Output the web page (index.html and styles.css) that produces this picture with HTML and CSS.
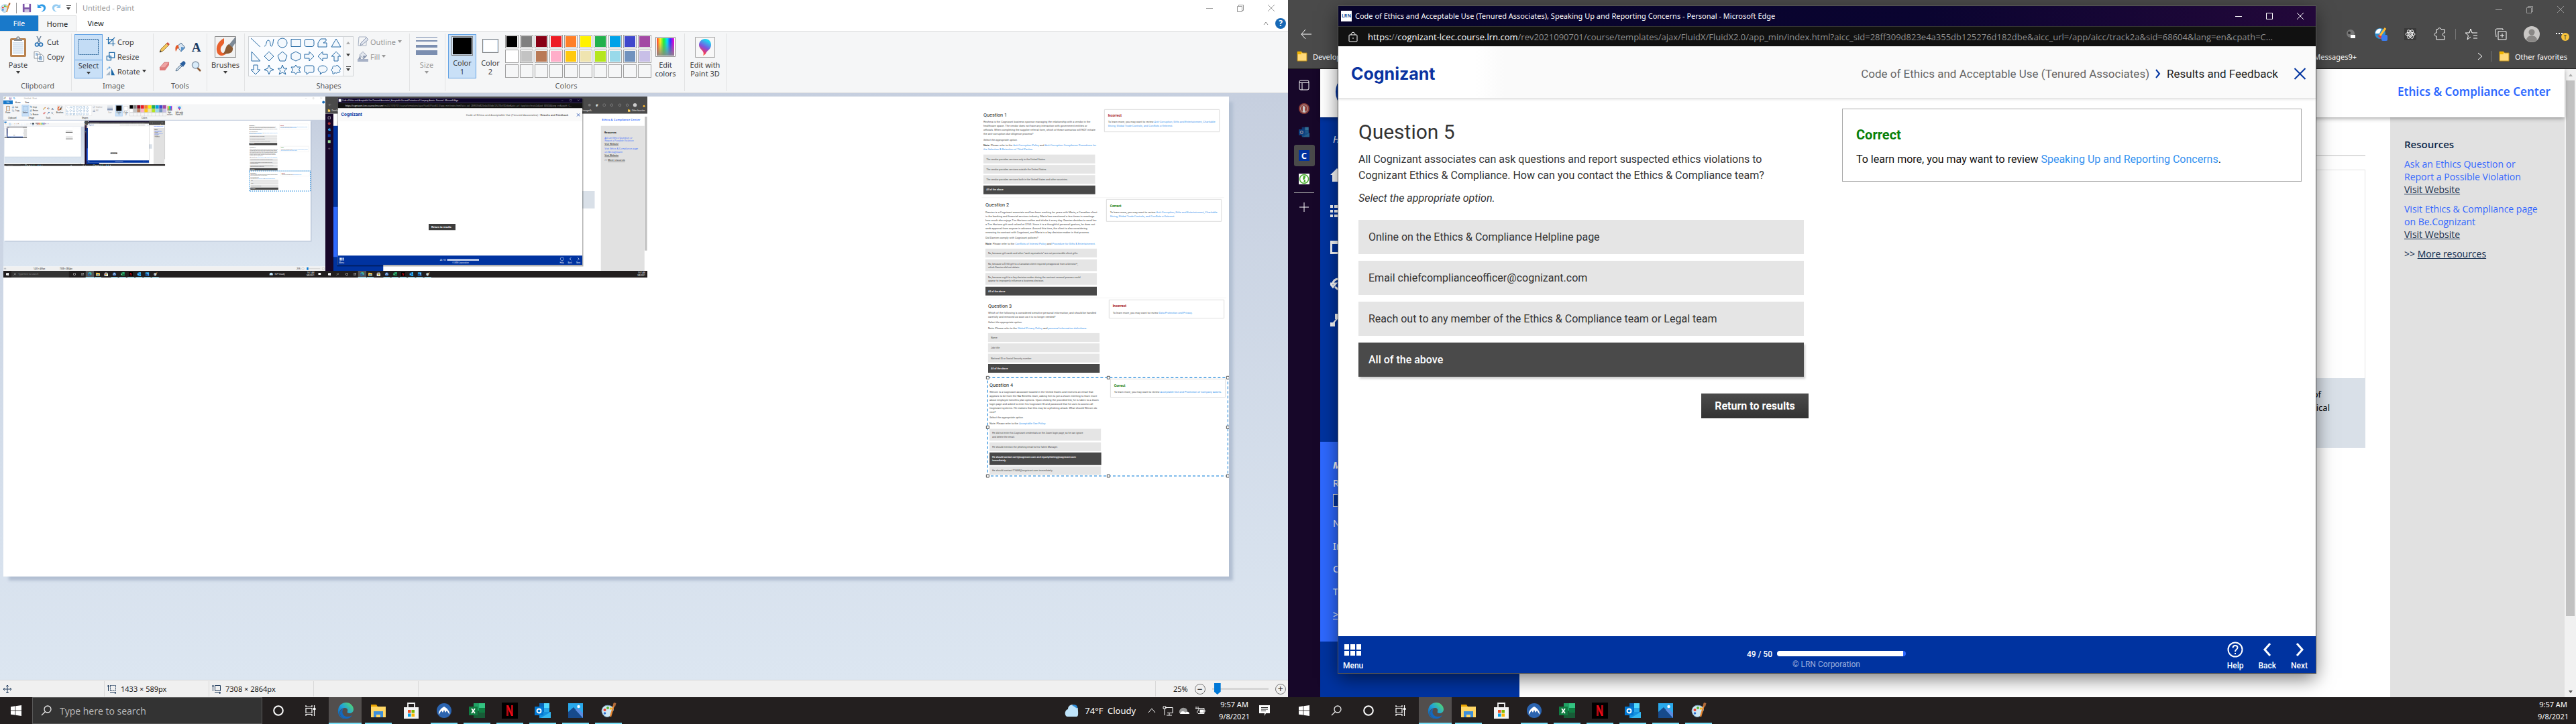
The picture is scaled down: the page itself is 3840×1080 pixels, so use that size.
FILE: index.html
```html
<!DOCTYPE html>
<html lang="en">
<head>
<meta charset="utf-8">
<title>Desktop</title>
<link rel="stylesheet" href="styles.css">
</head>
<body>
<svg class="defs" aria-hidden="true">
<defs>
  <symbol id="paint" viewBox="0 0 24 24"><path d="M2 12C3 5 9 3 15 5c5 2 6 7 2 9-2 1-1 3-2 5-2 4-12 4-13-7z" fill="#cfe8f5" stroke="#7fa9c4"/><circle cx="6.500" cy="11" r="2" fill="#e8402f"/><circle cx="11" cy="8" r="2" fill="#5bb531"/><circle cx="15.500" cy="9" r="1.800" fill="#f5b520"/><circle cx="6.500" cy="16" r="1.800" fill="#2d6fd0"/><path d="M21 1l-6 20" stroke="#e8862f" stroke-width="2.400"/><path d="M20 0l3.500 1-1.500 5-3-1z" fill="#b06a3b"/></symbol>
  <symbol id="save" viewBox="0 0 16 16"><path d="M1 1h14v14H1z" fill="#7d55a8"/><path d="M4 1h8v6H4z" fill="#fff"/><path d="M4 10h8v5H4z" fill="#cfc4de"/></symbol>
  <symbol id="undo" viewBox="0 0 16 16"><path d="M1 1v7h7L5.500 5.500C9 4 12 6 11.500 9.500 11 12 9 13.500 7 14.500c5 0 8-3 8-7C15 2 8 0 3.500 3.500z" fill="#2e9be6"/></symbol>
  <symbol id="paste" viewBox="0 0 26 32"><rect x="1" y="3" width="24" height="28" rx="2" fill="#b98350"/><path d="M4 6h18v22H4z" fill="#fff"/><path d="M5 10h16M5 13h16M5 16h16M5 19h16M5 22h16M5 25h16" stroke="#a9c3de"/><path d="M7 7V4h3c0-5 6-5 6 0h3v3z" fill="#8b8f94"/><circle cx="13" cy="3" r="1" fill="#fff"/></symbol>
  <symbol id="cut" viewBox="0 0 16 16"><path d="M5 0l5 10M11 0L6 10" stroke="#6d8299" stroke-width="1.500"/><circle cx="5" cy="12.500" r="2.500" fill="none" stroke="#2671b5" stroke-width="1.600"/><circle cx="11" cy="12.500" r="2.500" fill="none" stroke="#2671b5" stroke-width="1.600"/></symbol>
  <symbol id="copy" viewBox="0 0 16 16"><path d="M1 1h6l3 3v7H1zM6 5h6l3 3v7.500H6z" fill="#fff" stroke="#8a939c"/><path d="M3 4h3M3 6h3M8 9h5M8 11h5M8 13h5" stroke="#3c7dbd"/></symbol>
  <symbol id="select" viewBox="0 0 32 32"><rect x="1.500" y="4.500" width="29" height="23" fill="#c3dcf5" stroke="#17548c" stroke-dasharray="2 1"/></symbol>
  <symbol id="crop" viewBox="0 0 16 16"><path d="M4 0v12h12M0 4h12v12M5 11l10-10" fill="none" stroke="#1b67a6" stroke-width="1.400"/></symbol>
  <symbol id="resize" viewBox="0 0 16 16"><path d="M5.500 1.500h9v9h-9zM1.500 7.500h7v7h-7z" fill="#f5f9fd" stroke="#1b67a6" stroke-width="1.400"/></symbol>
  <symbol id="rotate" viewBox="0 0 16 16"><path d="M9 3l6 12H9z" fill="#1b67a6"/><path d="M7 8v7H0z" fill="#a8b8c8"/><path d="M2 6c0-3 2-4 5-4M5 0l2 2-2 2" fill="none" stroke="#2f86cf"/></symbol>
  <symbol id="pencil" viewBox="0 0 16 16"><path d="M1 15l2-5 9-9 3 3-9 9z" fill="#f3c55b" stroke="#8b6b2c" stroke-width=".8"/><path d="M11 2l3 3 2-2-3-3z" fill="#cf5044"/><path d="M1 15l1-3 2 2z" fill="#333"/></symbol>
  <symbol id="bucket" viewBox="0 0 16 16"><path d="M3 6l6-5 6 7-6 6z" fill="#d7e5f2" stroke="#52708f"/><path d="M9 7l6 1-6 6z" fill="#5c94c9"/><path d="M4 4C0 5 0 9 1 14c2-3 2-5 5-6z" fill="#e35a28"/></symbol>
  <symbol id="eraser" viewBox="0 0 16 16"><path d="M1 10l7-8h7l-6 8z" fill="#f0a3a3" stroke="#bb5959" stroke-width=".7"/><path d="M1 10h8v4H1zM9 10l6-8v4l-6 8z" fill="#e07a7a"/></symbol>
  <symbol id="dropper" viewBox="0 0 16 16"><path d="M1 15l1-3 6-6 2 2-6 6z" fill="#cfdde9" stroke="#54718c"/><path d="M7 4l5 5 1-2 2-2c2-3-2-6-4-4L9 3z" fill="#2a5f9e"/></symbol>
  <symbol id="lens" viewBox="0 0 16 16"><path d="M9 10l5 5" stroke="#8c5a33" stroke-width="2.500"/><circle cx="6.500" cy="6" r="5" fill="#d9ecfa" stroke="#8b9cad" stroke-width="1.500"/></symbol>
  <symbol id="brush" viewBox="0 0 32 32"><path d="M.5.500h31v31H.5z" fill="#f2f2f2" stroke="#8a8a8a"/><path d="M14 3C4 8 1 17 4 25c3 6 11 4 13 1-6 0-9-3-8-8 1-4 4-5 5-8z" fill="#e8602c"/><path d="M31 1L21 13l5 4 5-7z" fill="#7d8a97"/><path d="M21 12l6 5c1 8-5 10-15 9 5-3 3-11 9-14z" fill="#8a5a33"/></symbol>
  <symbol id="outline" viewBox="0 0 16 16"><path d="M2 1h11v13H1z" fill="none" stroke="#a9b3c4"/><path d="M4 14l1-4 8-8 3 3-8 7z" fill="#dfe4ee" stroke="#8d99b0"/></symbol>
  <symbol id="fill" viewBox="0 0 16 16"><path d="M3 6l5-5 6 6-5 5z" fill="#e3e7ee" stroke="#97a2b5"/><path d="M0 12h16v4H0z" fill="#a7b1c6"/><path d="M4 6l-3 6h4zM8 7h6l-5 5z" fill="#8d99b0"/></symbol>
  <symbol id="size" viewBox="0 0 32 32"><path d="M0 1h32v1H0zM0 6h32v2H0zM0 13h32v4H0zM0 21h32v7H0z" fill="#7b8eb0"/></symbol>
  <linearGradient id="rainbow"><stop offset="0" stop-color="#f33"/><stop offset=".2" stop-color="#fe2"/><stop offset=".4" stop-color="#2e3"/><stop offset=".6" stop-color="#0df"/><stop offset=".78" stop-color="#33f"/><stop offset="1" stop-color="#f0c"/></linearGradient>
  <linearGradient id="greyout" x2="0" y2="1"><stop offset=".2" stop-color="#888" stop-opacity="0"/><stop offset="1" stop-color="#888" stop-opacity=".9"/></linearGradient>
  <symbol id="spectrum" viewBox="0 0 32 32"><path d="M1.500 1.500h29v29h-29z" fill="#fff" stroke="#8a8a8a"/><path d="M3 3h26v26H3z" fill="url(#rainbow)"/><path d="M3 3h26v26H3z" fill="url(#greyout)"/></symbol>
  <linearGradient id="drop3d" x1="0" y1="1" x2=".4" y2="0"><stop offset="0" stop-color="#ffb300"/><stop offset=".3" stop-color="#ee3767"/><stop offset=".6" stop-color="#7b55e0"/><stop offset="1" stop-color="#22d3f2"/></linearGradient>
  <symbol id="p3d" viewBox="0 0 32 32"><path d="M1.500 1.500h29v30h-29z" fill="#f8f8f8" stroke="#a5a5a5"/><path d="M16 4c6 0 9 4 9 9 0 6-5 8-7 11-1 2-2 4-5 5 1-2 1-4 0-6-3-4-6-6-6-10 0-5 4-9 9-9z" fill="url(#drop3d)"/></symbol>

  <symbol id="s1" viewBox="0 0 16 16"><path d="M1 1l14 13"/></symbol>
  <symbol id="s2" viewBox="0 0 16 16"><path d="M1 13c4 0 2-9 6-9s2 10 5 9c2-1 2-7 3-11"/></symbol>
  <symbol id="s3" viewBox="0 0 16 16"><circle cx="8" cy="8" r="7"/></symbol>
  <symbol id="s4" viewBox="0 0 16 16"><path d="M1 2.500h14v11H1z"/></symbol>
  <symbol id="s5" viewBox="0 0 16 16"><rect x="1" y="2.500" width="14" height="11" rx="3"/></symbol>
  <symbol id="s6" viewBox="0 0 16 16"><path d="M1 14V8l4-6h8v3l-4 3h5v6z"/></symbol>
  <symbol id="s7" viewBox="0 0 16 16"><path d="M8 2l7 12H1z"/></symbol>
  <symbol id="s8" viewBox="0 0 16 16"><path d="M2 1v14h13z"/></symbol>
  <symbol id="s9" viewBox="0 0 16 16"><path d="M8 1l7 7-7 7-7-7z"/></symbol>
  <symbol id="s10" viewBox="0 0 16 16"><path d="M8 1l7 6-3 8H4L1 7z"/></symbol>
  <symbol id="s11" viewBox="0 0 16 16"><path d="M8 1l7 3.500v7L8 15l-7-3.500v-7z"/></symbol>
  <symbol id="s12" viewBox="0 0 16 16"><path d="M1 5h7V1l7 7-7 7v-4H1z"/></symbol>
  <symbol id="s13" viewBox="0 0 16 16"><path d="M15 5H8V1L1 8l7 7v-4h7z"/></symbol>
  <symbol id="s14" viewBox="0 0 16 16"><path d="M5 15V8H1l7-7 7 7h-4v7z"/></symbol>
  <symbol id="s15" viewBox="0 0 16 16"><path d="M5 1v7H1l7 7 7-7h-4V1z"/></symbol>
  <symbol id="s16" viewBox="0 0 16 16"><path d="M8 1l2 5 5 2-5 2-2 5-2-5-5-2 5-2z"/></symbol>
  <symbol id="s17" viewBox="0 0 16 16"><path d="M8 1l2 5h5l-4 3.500 2 5.500-5-3-5 3 2-5.500L1 6h5z"/></symbol>
  <symbol id="s18" viewBox="0 0 16 16"><path d="M8 1l2 3h5l-2.500 4L15 12h-5l-2 3-2-3H1l2.500-4L1 4h5z"/></symbol>
  <symbol id="s19" viewBox="0 0 16 16"><path d="M3 2h10q2 0 2 2v6q0 2-2 2H8l-4 3v-3H3q-2 0-2-2V4q0-2 2-2z"/></symbol>
  <symbol id="s20" viewBox="0 0 16 16"><path d="M4 15l1-3C-1 10 0 2 8 2s9 8 2 10H8z"/></symbol>
  <symbol id="s21" viewBox="0 0 16 16"><path d="M3 14c2 1 3-1 3-2 2 2 4 1 4 0 3 1 5-1 3-3 3-2 1-5-1-5 0-3-4-3-5-1C4 1 2 4 3 6c-3 1-2 4 0 5z"/></symbol>

  <symbol id="win" viewBox="0 0 16 16"><path d="M0 2.200l6.500-.9v6.200H0zM7.300 1.200L16 0v7.500H7.300zM0 8.300h6.500v6.300L0 13.700zM7.300 8.300H16V16l-8.700-1.200z" fill="#fff"/></symbol>
  <symbol id="search" viewBox="0 0 16 16"><circle cx="10" cy="6" r="5" fill="none" stroke="#e8e8e8" stroke-width="1.300"/><path d="M6.500 9.500L1 15" stroke="#e8e8e8" stroke-width="1.300"/></symbol>
  <symbol id="cortana" viewBox="0 0 16 16"><circle cx="8" cy="8" r="6.800" fill="none" stroke="#fff" stroke-width="2"/></symbol>
  <symbol id="tasks" viewBox="0 0 16 16"><path d="M1 0v2.500h9V0M1 16v-2.500h9V16M1 4.500h9v7H1zM13.500 0v16" fill="none" stroke="#fff" stroke-width="1.200"/><path d="M12 4h3.500v3H12z" fill="#fff"/></symbol>
  <linearGradient id="edgeg" x1="0" y1="1" x2="1" y2="0"><stop offset="0" stop-color="#0c4fa8"/><stop offset=".5" stop-color="#1fa0dc"/><stop offset="1" stop-color="#5de35a"/></linearGradient>
  <symbol id="edge" viewBox="0 0 24 24"><path d="M1 11C2 4 7 0 13 0c6 0 11 5 11 10 0 4-3 6-6 6-3 0-4-1-3-3 1-3-1-5-4-5-5 0-8 4-8 7 0 5 4 8 8 9C4 24 0 18 1 11z" fill="url(#edgeg)"/><path d="M9 9c-4 6 0 12 6 12 3 0 5-1 7-2-2 3-5 5-9 5-6 0-10-5-9-9 0-3 2-5 5-6z" fill="#1368c0"/></symbol>
  <symbol id="folder" viewBox="0 0 24 24"><path d="M1 3h8l2 3h12v15H1z" fill="#e8a200"/><path d="M1 6h22v16H1z" fill="#ffd766"/><path d="M5 22v-9h14v9h-4v-4H9v4z" fill="#3d8fdb"/></symbol>
  <symbol id="store" viewBox="0 0 24 24"><path d="M1 7h22v17H1z" fill="#f4f4f4"/><path d="M7 7V1h10v6" fill="none" stroke="#f4f4f4" stroke-width="1.800"/><path d="M7 11h4.500v4.500H7z" fill="#f25022"/><path d="M12.500 11H17v4.500h-4.500z" fill="#7fba00"/><path d="M7 16.500h4.500V21H7z" fill="#00a4ef"/><path d="M12.500 16.500H17V21h-4.500z" fill="#ffb900"/></symbol>
  <symbol id="nord" viewBox="0 0 24 24"><circle cx="12" cy="12" r="11" fill="#2b64b0"/><path d="M4 18c-1-5 4-10 8-12 4 2 9 7 8 12l-4-6-2 3-2-4-2 4-2-3z" fill="#fff"/></symbol>
  <symbol id="excel" viewBox="0 0 24 24"><path d="M7 1h17v22H7z" fill="#21a366"/><path d="M15 1h9v7h-9z" fill="#33c481"/><path d="M7 12h17v11H7z" fill="#185c37"/><path d="M15 8h9v7h-9z" fill="#107c41"/><path d="M0 6h13v13H0z" fill="#107c41"/><path d="M4 9l5 7M9 9l-5 7" stroke="#fff" stroke-width="1.800"/></symbol>
  <symbol id="netflix" viewBox="0 0 24 24"><path d="M0 0h24v24H0z"/><path d="M8.500 4v16M15.500 4v16" stroke="#b20710" stroke-width="3"/><path d="M7 4h3l7 16h-3z" fill="#e50914"/></symbol>
  <symbol id="outlook" viewBox="0 0 24 24"><path d="M7 1h15v20H7z" fill="#0a66b8"/><path d="M14 1h8v7h-8z" fill="#50d9ff"/><path d="M14 8h8v7h-8z" fill="#28a8ea"/><path d="M7 14h17v9H7z" fill="#1490df"/><path d="M24 14L9 23h15z" fill="#35b8f1"/><path d="M0 6h13v13H0z" fill="#0078d4"/><circle cx="6.500" cy="12.500" r="3" fill="none" stroke="#fff" stroke-width="1.800"/></symbol>
  <symbol id="photos" viewBox="0 0 24 24"><path d="M1 1h22v22H1z" fill="#29a9ec"/><path d="M1 14l8-7 14 16H1z" fill="#174a8c"/><path d="M12 11l3-3 8 8v7z" fill="#5b8be0"/><circle cx="16.500" cy="6" r="2.200" fill="#fff"/></symbol>
  <symbol id="bookmark" viewBox="0 0 16 16"><path d="M1 1h6l1.500 2H15v12H1z" fill="#ffd97a" stroke="#b98a15"/><path d="M1 1h6v4H1z" fill="#f0b400"/></symbol>

  <!-- question snips pasted on the drawing -->
  <g id="q1" class="snip">
    <text x="78" y="72" class="snip-h">Question 1</text>
    <text x="78" y="100">Reshma is the Cognizant business sponsor managing the relationship with a vendor in the</text>
    <text x="78" y="118">healthcare space. The vendor does not have any interaction with government entities or</text>
    <text x="78" y="136">officials. When completing the supplier referral form, which of these scenarios will NOT initiate</text>
    <text x="78" y="154">the anti-corruption due diligence process?</text>
    <text x="78" y="180" class="it">Select the appropriate option.</text>
    <text x="78" y="205"><tspan class="b">Note:</tspan> Please refer to the <tspan class="lk">Anti-Corruption Policy</tspan> and <tspan class="lk">Anti-Corruption Compliance Procedures for</tspan></text>
    <text x="78" y="222" class="lk">the Selection &amp; Retention of Third Parties.</text>
    <path class="opt" d="M78 242h499v39H78zM78 288h499v39H78zM78 334h499v39H78z"/><path class="on" d="M78 380h500v39H78z"/>
    <g class="ans"><text x="91" y="266">The vendor provides services only in the United States.</text>
    <text x="91" y="312">The vendor provides services outside the United States.</text>
    <text x="91" y="357">The vendor provides services both in the United States and other countries.</text>
    <text x="91" y="403" class="w">All of the above</text></g>
    <path class="box" d="M619 40h514v100H619z"/>
    <text x="635" y="72" class="bad">Incorrect</text>
    <text x="635" y="100">To learn more, you may want to review <tspan class="lk">Anti-Corruption, Gifts and Entertainment, Charitable</tspan></text>
    <text x="635" y="118" class="lk">Giving, Global Trade Controls, and Conflicts of Interest.</text>
    <path d="M70 434h1084" stroke="#eee" stroke-width="2"/>
  </g>
  <g id="q2" class="snip">
    <text x="87" y="475" class="snip-h">Question 2</text>
    <text x="87" y="504">Damien is a Cognizant associate and has been working for years with Maria, a Canadian client</text>
    <text x="87" y="521">in the banking and financial services industry. Maria has mentioned a few times in meetings</text>
    <text x="87" y="539">how much she enjoys Tim Hortons coffee and drinks it every day. Damien decides to send her</text>
    <text x="87" y="557">a Tim Hortons gift card valued at $150. Since it is a thoughtful personal gesture, he does not</text>
    <text x="87" y="575">seek approval from anyone in advance. Around this time, the client is also considering</text>
    <text x="87" y="593">renewing its contract with Cognizant, and Maria is a key decision-maker in that process.</text>
    <text x="87" y="619">Did Damien comply with Cognizant policies?</text>
    <text x="87" y="644"><tspan class="b">Note:</tspan> Please refer to the <tspan class="lk">Conflicts of Interest Policy</tspan> and <tspan class="lk">Procedure for Gifts &amp; Entertainment.</tspan></text>
    <path class="opt" d="M87 663h498v39H87zM87 711h498v52H87zM87 772h498v52H87z"/><path class="on" d="M87 833h498v39H87z"/>
    <g class="ans"><text x="99" y="688">No, because gift cards and other "cash equivalents" are not permissible client gifts.</text>
    <text x="99" y="734">No, because a $150 gift to a Canadian client required preapproval from a Director+,</text>
    <text x="99" y="750">which Damien did not obtain.</text>
    <text x="99" y="795">No, because a gift to a key decision-maker during the contract renewal process could</text>
    <text x="99" y="811">appear to improperly influence a business decision.</text>
    <text x="99" y="857" class="w">All of the above</text></g>
    <path class="box" d="M628 442h514v99H628z"/>
    <text x="644" y="476" class="good">Correct</text>
    <text x="644" y="504">To learn more, you may want to review <tspan class="lk">Anti-Corruption, Gifts and Entertainment, Charitable</tspan></text>
    <text x="644" y="521" class="lk">Giving, Global Trade Controls, and Conflicts of Interest.</text>
    <path d="M80 883h1084" stroke="#eee" stroke-width="2"/>
  </g>
  <g id="q3" class="snip">
    <text x="99" y="926" class="snip-h">Question 3</text>
    <text x="99" y="953">Which of the following is considered sensitive personal information, and should be handled</text>
    <text x="99" y="971">carefully and removed as soon as it is no longer needed?</text>
    <text x="99" y="996" class="it">Select the appropriate option.</text>
    <text x="99" y="1023">Note: Please refer to the <tspan class="lk">Global Privacy Policy</tspan> and <tspan class="lk">personal information definitions.</tspan></text>
    <path class="opt" d="M99 1041h498v39H99zM99 1087h498v39H99zM99 1133h498v39H99z"/><path class="on" d="M99 1179h499v39H99z"/>
    <g class="ans"><text x="111" y="1065">Name</text><text x="111" y="1111">Job title</text><text x="111" y="1157">National ID or Social Security number</text>
    <text x="111" y="1203" class="w">All of the above</text></g>
    <path class="box" d="M640 892h514v82H640z"/>
    <text x="656" y="925" class="bad">Incorrect</text>
    <text x="656" y="953">To learn more, you may want to review <tspan class="lk">Data Protection and Privacy.</tspan></text>
  </g>
  <g id="q4" class="snip">
    <text x="105" y="1280" class="snip-h">Question 4</text>
    <text x="105" y="1307">Wenxin is a Cognizant associate located in the United States and receives an email that</text>
    <text x="105" y="1325">appears to be from the NA Benefits team, asking him to join a Zoom meeting to learn more</text>
    <text x="105" y="1343">about employee benefits plan options. Upon clicking the provided link, he is taken to a Zoom</text>
    <text x="105" y="1361">login page and asked to enter his Cognizant ID and password that he uses to access all</text>
    <text x="105" y="1379">Cognizant systems. He realizes that this may be a phishing attack. What should Wenxin do</text>
    <text x="105" y="1397">next?</text>
    <text x="105" y="1423" class="it">Select the appropriate option.</text>
    <text x="105" y="1448">Note: Please refer to the <tspan class="lk">Acceptable Use Policy.</tspan></text>
    <path class="opt" d="M105 1469h498v53H105zM105 1530h498v39H105zM105 1637h498v38H105z"/><path class="on" d="M105 1575h500v56H105z"/>
    <g class="ans"><text x="117" y="1491">He did not enter his Cognizant credentials on the Zoom login page, so he can ignore</text>
    <text x="117" y="1508">and delete the email.</text>
    <text x="117" y="1553">He should mention the phishing email to his Talent Manager.</text>
    <text x="117" y="1598" class="w">He should contact csirt@cognizant.com and reportphishing@cognizant.com</text>
    <text x="117" y="1615" class="w">immediately.</text>
    <text x="117" y="1660">He should contact ITSAM@cognizant.com immediately.</text></g>
    <path class="box" d="M646 1246h514v82H646z"/>
    <text x="662" y="1280" class="good">Correct</text>
    <text x="662" y="1307">To learn more, you may want to review <tspan class="lk">Acceptable Use and Protection of Company Assets.</tspan></text>
  </g>
  <g id="taskicons">
    <use href="#cortana" x="102" y="12" width="16" height="16"/><use href="#tasks" x="150" y="12" width="16" height="16"/>
    <path d="M177 0h49v40h-49z" fill="#555"/><use href="#edge" x="189" y="8" width="24" height="24"/><use href="#folder" x="238" y="8" width="24" height="24"/><use href="#store" x="287" y="8" width="24" height="24"/><use href="#nord" x="336" y="8" width="24" height="24"/><use href="#excel" x="385" y="8" width="24" height="24"/><use href="#netflix" x="434" y="8" width="24" height="24"/><use href="#outlook" x="483" y="8" width="24" height="24"/><use href="#photos" x="532" y="8" width="24" height="24"/><use href="#paint" x="581" y="8" width="24" height="24"/>
    <path d="M177 37h49v3h-49zM230 37h40v3h-40zM328 37h40v3h-40zM377 37h40v3h-40zM426 37h40v3h-40zM475 37h40v3h-40zM524 37h40v3h-40zM573 37h40v3h-40z" fill="#76dff7"/>
  </g>
  <linearGradient id="desk" x2="0" y2="1"><stop offset="0" stop-color="#c6cfdf"/><stop offset="1" stop-color="#dce6f1"/></linearGradient>

  <!-- whole desktop as captured in the pasted screenshot -->
  <g id="screen" class="shot">
    <path d="M0 0h1920v139H0z" fill="#fff"/>
    <use href="#paint" y="2" width="16" height="16"/><use href="#save" x="34" y="4" width="15" height="15"/><use href="#undo" x="57" y="4" width="14" height="14"/>
    <text x="123" y="16" fill="#999">Untitled - Paint</text>
    <path d="M1799 10h11M1845 7h7v8h-7zM1890 5l10 10m0-10l-10 10" stroke="#999" fill="none"/>
    <path d="M0 23h56v23H0z" fill="#1979ca"/><text x="19" y="39" fill="#fff">File</text><text x="71" y="39">Home</text><text x="129" y="39">View</text><circle cx="1909" cy="34" r="8" fill="#1768b5"/>
    <path d="M0 46h1920v93H0z" fill="#f5f6f7"/>
    <use href="#paste" x="15" y="54" width="26" height="32"/><text x="13" y="100">Paste</text><use href="#cut" x="50" y="54" width="16" height="16"/><text x="70" y="66">Cut</text><use href="#copy" x="50" y="76" width="16" height="16"/><text x="70" y="88">Copy</text><text x="28" y="133">Clipboard</text>
    <path d="M111 51h42v66h-42z" fill="#c9e0f7" stroke="#62a2e4"/><use href="#select" x="116" y="54" width="32" height="32"/><text x="116" y="100">Select</text>
    <use href="#crop" x="158" y="54" width="14" height="14"/><text x="175" y="66">Crop</text><use href="#resize" x="158" y="77" width="14" height="14"/><text x="175" y="88">Resize</text><use href="#rotate" x="158" y="99" width="14" height="14"/><text x="175" y="110">Rotate</text><text x="151" y="133">Image</text>
    <use href="#pencil" x="236" y="63" width="16" height="16"/><use href="#bucket" x="260" y="63" width="16" height="16"/><text x="285" y="78" class="fa">A</text><use href="#eraser" x="236" y="91" width="16" height="16"/><use href="#dropper" x="260" y="91" width="16" height="16"/><use href="#lens" x="284" y="91" width="16" height="16"/><text x="254" y="133">Tools</text>
    <use href="#brush" x="320" y="54" width="32" height="32"/><text x="315" y="100">Brushes</text>
    <path d="M370 54h157v60H370z" fill="#fff" stroke="#ccc"/>
    <g class="shape-art"><use href="#s1" x="373" y="56" width="16" height="16"/><use href="#s2" x="393" y="56" width="16" height="16"/><use href="#s3" x="413" y="56" width="16" height="16"/><use href="#s4" x="433" y="56" width="16" height="16"/><use href="#s5" x="453" y="56" width="16" height="16"/><use href="#s6" x="473" y="56" width="16" height="16"/><use href="#s7" x="493" y="56" width="16" height="16"/><use href="#s8" x="373" y="76" width="16" height="16"/><use href="#s9" x="393" y="76" width="16" height="16"/><use href="#s10" x="413" y="76" width="16" height="16"/><use href="#s11" x="433" y="76" width="16" height="16"/><use href="#s12" x="453" y="76" width="16" height="16"/><use href="#s13" x="473" y="76" width="16" height="16"/><use href="#s14" x="493" y="76" width="16" height="16"/><use href="#s15" x="373" y="96" width="16" height="16"/><use href="#s16" x="393" y="96" width="16" height="16"/><use href="#s17" x="413" y="96" width="16" height="16"/><use href="#s18" x="433" y="96" width="16" height="16"/><use href="#s19" x="453" y="96" width="16" height="16"/><use href="#s20" x="473" y="96" width="16" height="16"/><use href="#s21" x="493" y="96" width="16" height="16"/></g>
    <use href="#outline" x="533" y="54" width="16" height="16"/><text x="552" y="66" fill="#999">Outline</text><use href="#fill" x="533" y="76" width="16" height="16"/><text x="552" y="88" fill="#999">Fill</text><text x="468" y="133">Shapes</text>
    <use href="#size" x="620" y="54" width="32" height="32"/><text x="625" y="100" fill="#999">Size</text>
    <path d="M668 51h42v66h-42z" fill="#c9e0f7" stroke="#62a2e4"/><path d="M673 54h32v32h-32z" stroke="#888"/><path d="M719 58h24v24h-24z" fill="#fff" stroke="#888"/><text x="675" y="100">Color</text><text x="686" y="113">1</text><text x="717" y="100">Color</text><text x="728" y="113">2</text>
    <g stroke="#a0a0a0"><path d="M753 52h20v20h-20z"/><path d="M775 52h20v20h-20z" fill="#7f7f7f"/><path d="M797 52h20v20h-20z" fill="#880015"/><path d="M819 52h20v20h-20z" fill="#ed1c24"/><path d="M841 52h20v20h-20z" fill="#ff7f27"/><path d="M863 52h20v20h-20z" fill="#fff200"/><path d="M885 52h20v20h-20z" fill="#22b14c"/><path d="M907 52h20v20h-20z" fill="#00a2e8"/><path d="M929 52h20v20h-20z" fill="#3f48cc"/><path d="M951 52h20v20h-20z" fill="#a349a4"/><path d="M753 74h20v20h-20z" fill="#fff"/><path d="M775 74h20v20h-20z" fill="#c3c3c3"/><path d="M797 74h20v20h-20z" fill="#b97a57"/><path d="M819 74h20v20h-20z" fill="#ffaec9"/><path d="M841 74h20v20h-20z" fill="#ffc90e"/><path d="M863 74h20v20h-20z" fill="#efe4b0"/><path d="M885 74h20v20h-20z" fill="#b5e61d"/><path d="M907 74h20v20h-20z" fill="#99d9ea"/><path d="M929 74h20v20h-20z" fill="#7092be"/><path d="M951 74h20v20h-20z" fill="#c8bfe7"/><path d="M753 96h218v20H753zM775 96v20M797 96v20M819 96v20M841 96v20M863 96v20M885 96v20M907 96v20M929 96v20M951 96v20" fill="none"/></g>
    <use href="#spectrum" x="976" y="54" width="32" height="32"/><text x="981" y="100">Edit</text><text x="977" y="113">colors</text><use href="#p3d" x="1034" y="54" width="32" height="32"/><text x="1027" y="100">Edit with</text><text x="1027" y="113">Paint 3D</text><text x="824" y="133">Colors</text>
    <path d="M0 139h1920v875H0z" fill="url(#desk)"/><path d="M10 150h1828v716H10z" fill="#aebbd0" opacity=".6"/><path d="M5 144h1827v716H5z" fill="#fff"/>
    <path d="M0 1014h1920v26H0z" fill="#f0f0f0"/><path d="M10 1020v14M3 1027h14" stroke="#234"/><text x="180" y="1031">1433 × 465px</text><text x="336" y="1031">7308 × 2864px</text><text x="1749" y="1031">25%</text><path d="M1809 1019h10v16h-10z" fill="#0078d7"/><path d="M1819 1027h70" stroke="#ccc" stroke-width="3"/><circle cx="1786" cy="1027" r="7" fill="none" stroke="#888"/><circle cx="1908" cy="1027" r="7" fill="none" stroke="#888"/>
    <path d="M1920 0h1920v103H1920z" fill="#4a4a4a"/><path d="M1955 50h-14m6-7l-7 7 7 7" stroke="#fff" fill="none"/><use href="#bookmark" x="1934" y="76" width="16" height="16"/><text x="1958" y="89" fill="#fff">Developer</text><use href="#bookmark" x="3723" y="76" width="16" height="16"/><text x="3747" y="89" fill="#fff">Other favorites</text><text x="3446" y="89" fill="#fff">Messages9+</text>
    <use href="#paint" x="3530" y="42" width="20" height="20"/><circle cx="3495" cy="51" r="8" fill="#777"/><circle cx="3583" cy="51" r="8" fill="none" stroke="#ddd"/><circle cx="3627" cy="51" r="7" fill="none" stroke="#fff"/><circle cx="3676" cy="51" r="7" fill="none" stroke="#fff"/><circle cx="3720" cy="51" r="7" fill="none" stroke="#fff"/><circle cx="3766" cy="51" r="11" fill="#ccc"/><circle cx="3820" cy="57" r="6" fill="#fb3"/>
    <path d="M1920 103h1920v937H1920z" fill="#fff"/><path d="M1920 103h48v937h-48z" fill="#170729"/><path d="M1968 175h297v865h-297z" fill="#0033a0"/><path d="M1968 659h297v298h-297z" fill="#2e69ff"/>
    <path d="M3563 175h260v865h-260z" fill="#e1e1e1"/><path d="M3825 120h13v799h-13z" fill="#c1c1c1"/><path d="M3400 564h126v104h-126z" fill="#d9e0e8"/>
    <path d="M1936 120h14v14h-14z" fill="none" stroke="#fff" stroke-width="2"/><circle cx="1943" cy="161" r="8" fill="#a33"/><use href="#outlook" x="1935" y="189" width="16" height="16"/><path d="M1935 225h16v16h-16z" fill="#0033a0"/><path d="M1935 261h16v16h-16z" fill="#9d9"/><path d="M1943 304v14m-7-7h14" stroke="#fff"/>
    <text x="3569" y="144" class="ecc">Ethics &amp; Compliance Center</text><g class="res"><text x="3584" y="221" class="b">Resources</text><g fill="#36f"><text x="3585" y="250">Ask an Ethics Question or</text><text x="3585" y="269">Report a Possible Violation</text><text x="3585" y="317">Visit Ethics &amp; Compliance page</text><text x="3585" y="336">on Be.Cognizant</text></g><text x="3585" y="288" class="u">Visit Website</text><text x="3585" y="355" class="u">Visit Website</text><text x="3585" y="384">&gt;&gt; <tspan class="u">More resources</tspan></text></g>
    <path d="M1990 14h1468v1000H1990z" opacity=".3"/><path d="M1995 9h1457v995H1995z" fill="#fff"/><path d="M1995 9h1457v30H1995z" fill="#0d0428"/><path d="M1995 39h1457v31H1995z" fill="#111"/><path d="M1995 70h1457v77H1995z" fill="#fafafa"/><path d="M1999 15h16v16h-16z" fill="#fff"/>
    <text x="2020" y="28" fill="#fff">Code of Ethics and Acceptable Use (Tenured Associates), Acceptable Use and Protection of Company Assets - Personal - Microsoft Edge</text>
    <text x="2039" y="59" class="url"><tspan fill="#fff">https://cognizant-lcec.course.lrn.com</tspan>/rev2021090701/course/templates/ajax/FluidX/FluidX2.0/app_min/index.html?aicc_sid=28ff309d823e4a355db125276d182dbe&amp;aicc_url=/app/aicc/track2a&amp;sid=68604&amp;lang=en&amp;cpath=C…</text>
    <path d="M3328 24h10M3378 18h10v10h-10zM3424 18l10 10m0-10l-10 10" stroke="#fff" fill="none"/>
    <text x="2014" y="117" class="logo-t">Cognizant</text><text x="2759" y="117" class="crumb-t">Code of Ethics and Acceptable Use (Tenured Associates) <tspan fill="#222">› Results and Feedback</tspan></text><path d="M3420 101l17 17m0-17l-17 17" stroke="#0033a0" stroke-width="3"/>
    <path d="M2536 760h160v37h-160z" fill="#3c3c3c"/><text x="2552" y="784" class="btn-t">Return to results</text>
    <path d="M1995 949h1457v55H1995z" fill="#0033a0"/><path d="M2005 962h7v7h-7zm9 0h7v7h-7zm9 0h7v7h-7zm-18 9h7v7h-7zm9 0h7v7h-7zm9 0h7v7h-7zM2646 971h190v8h-190z" fill="#fff"/><g fill="#fff"><text x="2002" y="997">Menu</text><text x="2603" y="981">48 / 50</text><text x="2677" y="996">© LRN Corporation</text><text x="3318" y="997">Help</text><text x="3366" y="997">Back</text><text x="3416" y="997">Next</text></g><path d="M3385 961l-8 8 8 8M3425 961l8 8-8 8" stroke="#fff" stroke-width="3" fill="none"/><circle cx="3331" cy="969" r="10" stroke="#fff" stroke-width="2" fill="none"/>
    <path d="M0 1040h3840v40H0z" fill="#211e1e"/><path d="M48 1040h343v40H48z" fill="#333"/><use href="#win" x="16" y="1052" width="16" height="16"/><use href="#search" x="60" y="1052" width="16" height="16"/><text x="89" y="1065" fill="#ccc" class="url">Type here to search</text><use href="#taskicons" x="314" y="1040"/><use href="#win" x="1936" y="1052" width="16" height="16"/><use href="#search" x="1984" y="1052" width="16" height="16"/><use href="#taskicons" x="1938" y="1040"/>
    <g fill="#fff"><text x="1617" y="1065">74°F  Cloudy</text><text x="1812" y="1055">9:57 AM</text><text x="1808" y="1073">9/8/2021</text><text x="3785" y="1055">9:57 AM</text><text x="3781" y="1073">9/8/2021</text><path d="M1878 1052h15v12h-15z"/></g><path d="M1587 1060c0-12 20-12 20 0v6h-20z" fill="#bfe4fa"/>
  </g>
</defs>
</svg>

<main class="desktop">
<section class="monitor" aria-label="Left monitor">
  <header class="paint-title">
    <div class="quick">
      <svg class="i16" aria-hidden="true"><use href="#paint"/></svg><i class="vr"></i>
      <button aria-label="Save"><svg class="i14"><use href="#save"/></svg></button>
      <button aria-label="Undo"><svg class="i14"><use href="#undo"/></svg></button>
      <button aria-label="Redo" class="faded"><svg class="i14 flip"><use href="#undo"/></svg></button>
      <button aria-label="Customize" class="more"><i class="tri"></i></button><i class="vr"></i>
      <span class="grey">Untitled - Paint</span>
    </div>
    <div class="win-ctl grey">
      <button aria-label="Minimize"><svg viewBox="0 0 12 12"><path d="M1 6.500h10"/></svg></button>
      <button aria-label="Restore"><svg viewBox="0 0 12 12"><path d="M1.500 3.500h7v8h-7zM3.500 3.500v-2h7v8h-2"/></svg></button>
      <button aria-label="Close"><svg viewBox="0 0 12 12"><path d="M1 1l10 10M11 1L1 11"/></svg></button>
    </div>
  </header>
  <nav class="tabs">
    <button class="tab file">File</button><button class="tab home">Home</button><button class="tab">View</button>
    <span class="tab-end"><svg viewBox="0 0 10 10" class="caret"><path d="M2 7l3-4 3 4"/></svg><button class="help" aria-label="Help">?</button></span>
  </nav>
  <div class="ribbon">
    <section class="grp g-clip"><div class="body">
      <button class="big"><svg><use href="#paste"/></svg><span>Paste</span><i class="tri"></i></button>
      <div class="rows"><button class="row"><svg class="i16"><use href="#cut"/></svg>Cut</button><button class="row"><svg class="i16"><use href="#copy"/></svg>Copy</button></div>
    </div><h3>Clipboard</h3></section>
    <section class="grp g-img"><div class="body">
      <button class="big active split"><svg><use href="#select"/></svg><span>Select</span><i class="tri"></i></button>
      <div class="rows"><button class="row"><svg class="i14"><use href="#crop"/></svg>Crop</button><button class="row"><svg class="i14"><use href="#resize"/></svg>Resize</button><button class="row"><svg class="i14"><use href="#rotate"/></svg>Rotate <i class="tri"></i></button></div>
    </div><h3>Image</h3></section>
    <section class="grp g-tools"><div class="body tools">
      <button aria-label="Pencil"><svg class="i16"><use href="#pencil"/></svg></button><button aria-label="Fill with color"><svg class="i16"><use href="#bucket"/></svg></button><button class="text-tool">A</button>
      <button aria-label="Eraser"><svg class="i16"><use href="#eraser"/></svg></button><button aria-label="Color picker"><svg class="i16"><use href="#dropper"/></svg></button><button aria-label="Magnifier"><svg class="i16"><use href="#lens"/></svg></button>
    </div><h3>Tools</h3></section>
    <section class="grp g-brush"><div class="body"><button class="big"><svg><use href="#brush"/></svg><span>Brushes</span><i class="tri"></i></button></div></section>
    <section class="grp g-shapes"><div class="body">
      <div class="shape-box"><div class="shape-grid shape-art">
        <button aria-label="Line"><svg><use href="#s1"/></svg></button><button aria-label="Curve"><svg><use href="#s2"/></svg></button><button aria-label="Oval"><svg><use href="#s3"/></svg></button><button aria-label="Rectangle"><svg><use href="#s4"/></svg></button><button aria-label="Rounded rectangle"><svg><use href="#s5"/></svg></button><button aria-label="Polygon"><svg><use href="#s6"/></svg></button><button aria-label="Triangle"><svg><use href="#s7"/></svg></button>
        <button aria-label="Right triangle"><svg><use href="#s8"/></svg></button><button aria-label="Diamond"><svg><use href="#s9"/></svg></button><button aria-label="Pentagon"><svg><use href="#s10"/></svg></button><button aria-label="Hexagon"><svg><use href="#s11"/></svg></button><button aria-label="Right arrow"><svg><use href="#s12"/></svg></button><button aria-label="Left arrow"><svg><use href="#s13"/></svg></button><button aria-label="Up arrow"><svg><use href="#s14"/></svg></button>
        <button aria-label="Down arrow"><svg><use href="#s15"/></svg></button><button aria-label="Four-point star"><svg><use href="#s16"/></svg></button><button aria-label="Five-point star"><svg><use href="#s17"/></svg></button><button aria-label="Six-point star"><svg><use href="#s18"/></svg></button><button aria-label="Rounded callout"><svg><use href="#s19"/></svg></button><button aria-label="Oval callout"><svg><use href="#s20"/></svg></button><button aria-label="Cloud callout"><svg><use href="#s21"/></svg></button>
      </div><div class="shape-scroll"><button aria-label="Scroll up"><i class="tri up"></i></button><button aria-label="Scroll down"><i class="tri"></i></button><button aria-label="More shapes" class="more"><i class="tri"></i></button></div></div>
      <div class="rows dim"><button class="row" disabled><svg class="i16"><use href="#outline"/></svg>Outline <i class="tri"></i></button><button class="row" disabled><svg class="i16"><use href="#fill"/></svg>Fill <i class="tri"></i></button></div>
    </div><h3>Shapes</h3></section>
    <section class="grp g-size"><div class="body"><button class="big dim" disabled><svg><use href="#size"/></svg><span>Size</span><i class="tri"></i></button></div></section>
    <section class="grp g-colors"><div class="body">
      <button class="big active"><i class="well black"></i><span>Color<br>1</span></button>
      <button class="big"><i class="well white"></i><span>Color<br>2</span></button>
      <div class="palette">
        <button aria-label="Black" class="c-black"></button><button aria-label="Gray" class="c-gray"></button><button aria-label="Dark red" class="c-dred"></button><button aria-label="Red" class="c-red"></button><button aria-label="Orange" class="c-orange"></button><button aria-label="Yellow" class="c-yellow"></button><button aria-label="Green" class="c-green"></button><button aria-label="Turquoise" class="c-turq"></button><button aria-label="Indigo" class="c-indigo"></button><button aria-label="Purple" class="c-purple"></button>
        <button aria-label="White" class="c-white"></button><button aria-label="Light gray" class="c-lgray"></button><button aria-label="Brown" class="c-brown"></button><button aria-label="Rose" class="c-rose"></button><button aria-label="Gold" class="c-gold"></button><button aria-label="Light yellow" class="c-cream"></button><button aria-label="Lime" class="c-lime"></button><button aria-label="Light turquoise" class="c-sky"></button><button aria-label="Blue gray" class="c-steel"></button><button aria-label="Lavender" class="c-lav"></button>
        <button aria-label="Empty 1" class="empty"></button><button aria-label="Empty 2" class="empty"></button><button aria-label="Empty 3" class="empty"></button><button aria-label="Empty 4" class="empty"></button><button aria-label="Empty 5" class="empty"></button><button aria-label="Empty 6" class="empty"></button><button aria-label="Empty 7" class="empty"></button><button aria-label="Empty 8" class="empty"></button><button aria-label="Empty 9" class="empty"></button><button aria-label="Empty 10" class="empty"></button>
      </div>
      <button class="big"><svg><use href="#spectrum"/></svg><span>Edit<br>colors</span></button>
    </div><h3>Colors</h3></section>
    <section class="grp g-3d"><div class="body"><button class="big"><svg><use href="#p3d"/></svg><span>Edit with<br>Paint 3D</span></button></div></section>
  </div>
  <div class="workspace">
    <svg class="drawing" viewBox="0 0 1827 716" role="img" aria-label="Drawing">
      <svg width="960" height="270" viewBox="0 0 3840 1080">
        <use href="#screen"/>
        <svg x="1440" y="150" width="480" height="570" viewBox="0 0 1440 1710"><use href="#q1"/><use href="#q2"/><use href="#q3"/></svg>
        <path d="M1466 444h365v120h-365z" fill="none" stroke="#0078d7" stroke-width="4" stroke-dasharray="6 6"/>
        <svg x="5" y="144" width="960" height="270" viewBox="0 0 3840 1080"><use href="#screen"/>
          <svg x="1440" y="150" width="480" height="570" viewBox="0 0 1440 1710"><use href="#q1"/><use href="#q2"/></svg>
          <svg x="5" y="144" width="540" height="270" viewBox="1680 0 2160 1080"><use href="#screen"/></svg>
        </svg>
      </svg>
      <svg x="1435" y="6" width="400" height="570" viewBox="0 0 1200 1710">
        <use href="#q1"/><use href="#q2"/><use href="#q3"/><use href="#q4"/>
        <path d="M97 1240h1074v440H97z" fill="none" stroke="#0078d7" stroke-width="3" stroke-dasharray="12 9"/>
        <path d="M91 1234h12v12H91zM631 1234h12v12h-12zM1165 1234h12v12h-12zM91 1456h12v12H91zM1165 1456h12v12h-12zM91 1674h12v12H91zM631 1674h12v12h-12zM1165 1674h12v12h-12z" fill="#fff" stroke="#555" stroke-width="3"/>
      </svg>
    </svg>
  </div>
  <footer class="status">
    <span class="cell"><svg viewBox="0 0 14 14"><path d="M7 1v12M1 7h12M5 3l2-2 2 2M5 11l2 2 2-2M3 5L1 7l2 2M11 5l2 2-2 2"/></svg></span>
    <span class="cell"><svg viewBox="0 0 14 14"><path d="M4.500 1.500h8v8h-8z" stroke-dasharray="2 1"/><path d="M1.500 1v9M4 12.500h9M0 3l1.500-2L3 3M11 11l2 1.500-2 1.500"/></svg>1433 × 589px</span>
    <span class="cell"><svg viewBox="0 0 14 14"><path d="M4.500 1.500h8v8h-8z"/><path d="M1.500 1v9M4 12.500h9M0 3l1.500-2L3 3M11 11l2 1.500-2 1.500"/></svg>7308 × 2864px</span>
    <span class="cell"></span>
    <span class="zoom"><label for="zoom">25%</label><button aria-label="Zoom out">−</button><input id="zoom" type="range" min="0" max="100" value="4"><button aria-label="Zoom in">+</button></span>
  </footer>
  <footer class="taskbar">
    <button class="tb"><svg class="i16"><use href="#win"/></svg></button>
    <label class="tb-search"><svg class="i16"><use href="#search"/></svg><input type="text" aria-label="Search" placeholder="Type here to search"></label>
    <button class="tb"><svg class="i16"><use href="#cortana"/></svg></button>
    <button class="tb"><svg class="i16"><use href="#tasks"/></svg></button>
    <button class="app open current"><svg><use href="#edge"/></svg></button><button class="app open"><svg><use href="#folder"/></svg></button><button class="app"><svg><use href="#store"/></svg></button><button class="app open"><svg><use href="#nord"/></svg></button><button class="app open"><svg><use href="#excel"/></svg></button><button class="app open"><svg><use href="#netflix"/></svg></button><button class="app open"><svg><use href="#outlook"/></svg></button><button class="app open"><svg><use href="#photos"/></svg></button><button class="app open"><svg><use href="#paint"/></svg></button>
    <div class="tray">
      <svg class="weather" viewBox="0 0 22 22"><path d="M5 9c0-8 10-9 11-3l4 1c-1 0 2 13-2 13H4C-1 19 0 10 5 9z" fill="#bfe4fa"/><path d="M11 3c4-2 9 0 8 5l-3-2z" fill="#2a8edb"/></svg>
      <span class="forecast">74°F&ensp;Cloudy</span>
      <svg class="i16 line" viewBox="0 0 16 16"><path d="M3 11l5-6 5 6"/></svg>
      <svg class="i16 line" viewBox="0 0 16 16"><path d="M4 3.500h11v8H7M10 12v3M6 15h8M1 2h4v3H1zM3 5v10"/></svg>
      <svg class="i16" viewBox="0 0 16 16"><path d="M1 12C0 7 4 3 8 4c5 0 5 4 5 8z" fill="#999"/><path d="M2 13c1-5 6-5 8-2 4-3 6 0 6 2z" fill="#fff"/></svg>
      <svg class="i16 line" viewBox="0 0 16 16"><path d="M6 4.500h8v8H5M15 7v3M2 2v3M5 2v3M1 5h5v2L3.500 9v3"/><path d="M8 7h5v4H8z" fill="#fff"/></svg>
      <time class="clock">9:57 AM<br>9/8/2021</time>
      <svg class="i16 note" viewBox="0 0 16 16"><path d="M0 0h16v12h-6l-2 4v-4H0z" fill="#fff"/><path d="M3 3.500h10M3 6h10M3 8.500h7" stroke="#222"/></svg>
    </div>
  </footer>
</section>

<section class="monitor" aria-label="Right monitor">
  <div class="edge-area">
    <header class="edge-head">
      <div class="edge-ctl win-ctl"><button aria-label="Minimize"><svg viewBox="0 0 12 12"><path d="M1 6.500h10"/></svg></button><button aria-label="Restore"><svg viewBox="0 0 12 12"><path d="M1.500 3.500h7v8h-7zM3.500 3.500v-2h7v8h-2"/></svg></button><button aria-label="Close"><svg viewBox="0 0 12 12"><path d="M1 1l10 10M11 1L1 11"/></svg></button></div>
      <div class="edge-tools">
        <svg class="line back" viewBox="0 0 18 18"><path d="M17 9H2M8 2L2 9l6 7"/></svg>
        <span class="ext">
          <svg viewBox="0 0 20 20"><circle cx="9" cy="9" r="6" fill="#777"/><circle cx="7" cy="8" r="2" fill="#333"/><path d="M9 11h7v5H9z" fill="#fff"/></svg>
          <svg viewBox="0 0 20 20"><circle cx="9" cy="9" r="8" fill="#2f8fd0"/><path d="M2 9a7 7 0 0 1 9-7l-3 7z" fill="#fff"/><path d="M5 12l5 5 2-6z" fill="#e33"/><path d="M17 1L9 12" stroke="#fb3" stroke-width="3"/><rect x="11" y="11" width="9" height="9" rx="2" fill="#3b7cf0"/></svg>
          <svg viewBox="0 0 20 20" class="line"><path d="M1 1h18v18H1z" fill="#3a3a3a" stroke="none"/><circle cx="10" cy="10" r="1.500"/><ellipse cx="10" cy="10" rx="7" ry="3"/><ellipse cx="10" cy="10" rx="7" ry="3" transform="rotate(60 10 10)"/><ellipse cx="10" cy="10" rx="7" ry="3" transform="rotate(120 10 10)"/></svg>
          <svg viewBox="0 0 20 20" class="line"><path d="M7 3c0-3 5-3 5 0h5v5c-4 0-4 5 0 5v5H5v-5c-4 0-4-5 0-5V3z"/></svg>
        </span>
        <i class="vr"></i>
        <span class="ext"><svg viewBox="0 0 20 20" class="line"><path d="M9 14l-5 4 1.500-6L1 8h6l2-6 2 6h8M13 12h6M13 16h6"/></svg>
          <svg viewBox="0 0 20 20" class="line"><path d="M6 6h12v12H6zM12 9v6M9 12h6M3 14L2 4q0-2 2-2h9v2"/></svg>
          <svg viewBox="0 0 24 24" class="avatar"><circle cx="12" cy="12" r="12" fill="#c9c7c5"/><circle cx="12" cy="9" r="4.500" fill="#8a8886"/><path d="M4 20c2-8 14-8 16 0-4 5-12 5-16 0z" fill="#8a8886"/></svg>
          <svg viewBox="0 0 20 20"><path d="M0 8h2v2H0zm4 0h2v2H4zm4 0h2v2H8z" fill="#fff"/><circle cx="14" cy="14" r="6" fill="#f8c33c"/><path d="M14 18v-7m-2 2l2-2 2 2" stroke="#553" fill="none"/></svg></span>
      </div>
      <div class="edge-marks"><a href="#dev" class="mark"><svg class="i16"><use href="#bookmark"/></svg>Developer</a>
        <a href="#messages" class="mark messages">Messages9+</a><svg class="line chev" viewBox="0 0 10 12"><path d="M2 1l6 5-6 5"/></svg><i class="vr"></i><a href="#other" class="mark"><svg class="i16"><use href="#bookmark"/></svg>Other favorites</a></div>
    </header>
    <div class="edge-body">
      <aside class="vtabs">
        <svg viewBox="0 0 16 16" class="line"><rect x="1" y="1" width="14" height="14" rx="2"/><path d="M1 4.500h14M5 5v10"/></svg>
        <svg viewBox="0 0 16 16"><circle cx="8" cy="8" r="8" fill="#8e3f3a"/><circle cx="8" cy="8" r="5.500" fill="none" stroke="#aaa"/><path d="M6 4c4 0 4 3 3 5l1 5-4-1z" fill="#ccc"/></svg>
        <svg viewBox="0 0 24 24" class="faded"><use href="#outlook"/></svg>
        <button class="vtab-on"><span>C</span></button>
        <svg viewBox="0 0 16 16"><path d="M0 0h16v16H0z" fill="#fff"/><circle cx="8" cy="8" r="6.500" fill="none" stroke="#4bae33" stroke-width="1.500"/><path d="M7 3h3v3L8 9h2v4H7l1-3-2-2z" fill="#4bae33"/></svg>
        <hr>
        <svg viewBox="0 0 16 16" class="line"><path d="M8 1v14M1 8h14"/></svg>
      </aside>
      <div class="page">
        <header class="page-head"><svg viewBox="0 0 60 60" aria-hidden="true"><circle cx="30" cy="30" r="30" fill="#0033a0"/></svg><a href="#center">Ethics &amp; Compliance Center</a></header>
        <div class="page-cols">
          <nav class="page-nav">
            <div class="nav-top"><em>H</em>
              <svg viewBox="0 0 20 20"><path d="M10 0L0 10h3v10h14V10h3z"/></svg><svg viewBox="0 0 20 20"><path d="M0 1h4v4H0zM6 1h14v4H6zM0 8h4v4H0zM6 8h14v4H6zM0 15h4v4H0zM6 15h14v4H6z"/></svg><svg viewBox="0 0 20 20"><path d="M0 0h20v20H0zM3 5v12h14V5z" fill-rule="evenodd"/></svg><svg viewBox="0 0 20 20"><path d="M4 11C4 5 8 3 13 3M0 10h8l-4 5zM7 15l5 4" fill="none" stroke="#fff" stroke-width="3"/></svg><svg viewBox="0 0 20 20"><path d="M2 18L12 6M8 2h8v6H8zM0 15h6v5H0z" stroke="#fff" stroke-width="2"/></svg></div>
            <div class="nav-mid"><b><em>M</em></b><label for="r">R</label><input id="r" type="text"><a href="#n">N</a><a href="#i">In</a><a href="#c">C</a><a href="#t">T</a><a href="#more"><u>&gt;&gt;</u></a></div>
          </nav>
          <div class="page-main"><hr><div class="frame"></div><p class="quote">of&emsp;<br>ical</p></div>
          <aside class="resources"><h2>Resources</h2>
            <p><a href="#ask">Ask an Ethics Question or<br>Report a Possible Violation</a><br><a href="#ask-site" class="dark">Visit Website</a></p>
            <p><a href="#be">Visit Ethics &amp; Compliance page<br>on Be.Cognizant</a><br><a href="#be-site" class="dark">Visit Website</a></p>
            <p>&gt;&gt; <a href="#res" class="dark">More resources</a></p></aside>
        </div>
      </div>
      <div class="scrollbar"><i class="tri up"></i><span></span><i class="tri"></i></div>
    </div>
    <article class="popup">
      <header class="pop-title"><b class="lrn">LRN</b><span>Code of Ethics and Acceptable Use (Tenured Associates), Speaking Up and Reporting Concerns - Personal - Microsoft Edge</span>
        <div class="win-ctl"><button aria-label="Minimize"><svg viewBox="0 0 12 12"><path d="M1 6.500h10"/></svg></button><button aria-label="Maximize"><svg viewBox="0 0 12 12"><path d="M1.500 1.500h9v9h-9z"/></svg></button><button aria-label="Close"><svg viewBox="0 0 12 12"><path d="M1 1l10 10M11 1L1 11"/></svg></button></div></header>
      <div class="pop-url"><svg viewBox="0 0 14 16" class="line"><rect x="1" y="5" width="12" height="10" rx="1"/><path d="M4 5c0-5 6-5 6 0M7 9v2"/></svg><span><b>https:</b>//<b>cognizant-lcec.course.lrn.com</b>/rev2021090701/course/templates/ajax/FluidX/FluidX2.0/app_min/index.html?aicc_sid=28ff309d823e4a355db125276d182dbe&amp;aicc_url=/app/aicc/track2a&amp;sid=68604&amp;lang=en&amp;cpath=C...</span></div>
      <div class="pop-head"><span class="logo">Cognizant</span><nav class="crumbs"><a href="#course">Code of Ethics and Acceptable Use (Tenured Associates)</a><svg viewBox="0 0 8 14"><path d="M1 1l5 6-5 6"/></svg><span>Results and Feedback</span><button aria-label="Close course"><svg viewBox="0 0 18 18"><path d="M1 1l16 16M17 1L1 17"/></svg></button></nav></div>
      <div class="pop-body">
        <section class="question"><h1>Question 5</h1>
          <p>All Cognizant associates can ask questions and report suspected ethics violations to<br>Cognizant Ethics &amp; Compliance. How can you contact the Ethics &amp; Compliance team?</p>
          <p><em>Select the appropriate option.</em></p>
          <div class="options"><button>Online on the Ethics &amp; Compliance Helpline page</button><button>Email chiefcomplianceofficer@cognizant.com</button><button>Reach out to any member of the Ethics &amp; Compliance team or Legal team</button><button class="picked">All of the above</button></div>
          <button class="return">Return to results</button>
        </section>
        <section class="feedback"><h2>Correct</h2><p>To learn more, you may want to review <a href="#speaking">Speaking Up and Reporting Concerns</a>.</p></section>
      </div>
      <footer class="pop-foot">
        <button class="menu"><svg viewBox="0 0 26 24"><path d="M0 4h7v8H0zM9 4h7v8H9zM18 4h7v8h-7zM0 14h7v7H0zM9 14h7v7H9zM18 14h7v7h-7z"/></svg>Menu</button>
        <div class="progress"><div><label for="prog">49 / 50</label><progress id="prog" max="50" value="49"></progress></div><small>© LRN Corporation</small></div>
        <div class="foot-nav"><button><svg viewBox="0 0 24 24"><circle cx="12" cy="12" r="10.500"/><path d="M8.500 9.500c0-5 7-4.500 7-.5 0 3-3.500 2.500-3.500 6M12 17v2"/></svg>Help</button><button><svg viewBox="0 0 24 24"><path d="M16 3l-8 9 8 9" stroke-width="3"/></svg>Back</button><button><svg viewBox="0 0 24 24"><path d="M8 3l8 9-8 9" stroke-width="3"/></svg>Next</button></div>
      </footer>
    </article>
  </div>
  <footer class="taskbar">
    <button class="tb"><svg class="i16"><use href="#win"/></svg></button><button class="tb"><svg class="i16"><use href="#search"/></svg></button><button class="tb"><svg class="i16"><use href="#cortana"/></svg></button><button class="tb"><svg class="i16"><use href="#tasks"/></svg></button>
    <button class="app open current"><svg><use href="#edge"/></svg></button><button class="app open"><svg><use href="#folder"/></svg></button><button class="app"><svg><use href="#store"/></svg></button><button class="app open"><svg><use href="#nord"/></svg></button><button class="app open"><svg><use href="#excel"/></svg></button><button class="app open"><svg><use href="#netflix"/></svg></button><button class="app open"><svg><use href="#outlook"/></svg></button><button class="app open"><svg><use href="#photos"/></svg></button><button class="app open"><svg><use href="#paint"/></svg></button>
    <div class="tray"><time class="clock">9:57 AM<br>9/8/2021</time></div>
  </footer>
</section>
</main>
</body>
</html>
```
FILE: styles.css
```css
* { box-sizing: border-box; }
body { margin: 0; font: 11px/13px "Noto Sans", "Open Sans", sans-serif; color: #3b3b3b; background: #fff; }
button { font: inherit; color: inherit; background: none; border: 0; padding: 0; }
a { color: inherit; text-decoration: none; }
h1, h2, h3, p { margin: 0; font-weight: 400; }
svg { display: block; flex: none; }
.defs { position: absolute; width: 0; height: 0; }
.i14 { width: 14px; height: 14px; }
.i16 { width: 16px; height: 16px; }
.line { fill: none; stroke: #fff; stroke-width: 1; }
.vr { width: 1px; height: 16px; background: #999; flex: none; }
.grey { color: #999; }
.faded { opacity: .5; }
.flip { transform: scaleX(-1); }
.tri { display: block; width: 0; height: 0; border: 3px solid transparent; border-top: 4px solid currentColor; border-bottom: 0; }
.tri.up { border-top: 0; border-bottom: 4px solid #aaa; }
.more .tri { margin-top: 2px; }
.more::before { content: ""; display: block; width: 7px; height: 1px; background: currentColor; }

.desktop { display: grid; grid-template-columns: 1fr 1fr; min-height: 100vh; }
.monitor { display: flex; flex-direction: column; min-width: 0; }

/* Paint window */
.paint-title { display: flex; justify-content: space-between; height: 23px; }
.quick { display: flex; align-items: center; gap: 8px; }
.win-ctl { display: flex; }
.win-ctl button { width: 46px; display: flex; justify-content: center; align-items: center; }
.win-ctl svg { width: 12px; height: 12px; fill: none; stroke: currentColor; }
.paint-title .win-ctl { padding-right: 2px; }
.tabs { display: flex; height: 23px; }
.tab { width: 57px; color: #222; }
.tab.file { background: #1979ca; color: #fff; }
.tab.home { background: #f5f6f7; border: 1px solid #dadbdc; border-bottom: 0; }
.tab-end { margin-left: auto; display: flex; align-items: center; gap: 9px; padding-right: 3px; }
.caret { width: 10px; height: 10px; fill: none; stroke: #888; }
.help { width: 16px; height: 16px; border-radius: 8px; background: #1768b5; color: #fff; font-weight: 700; font-size: 12px; }
.ribbon { display: flex; height: 93px; background: #f5f6f7; border-top: 1px solid #dadbdc; border-bottom: 1px solid #dadbdc; padding-top: 3px; }
.grp { display: flex; flex-direction: column; justify-content: space-between; height: 86px; padding-top: 1px; border-right: 1px solid #e2e3e4; }
.grp h3 { font-size: 11px; line-height: 16px; text-align: center; color: #5a5a5a; }
.body { display: flex; height: 68px; }
.g-clip { width: 107px; padding-left: 6px; }
.g-img { width: 122px; padding-left: 4px; }
.g-tools { width: 80px; }
.g-brush { width: 56px; padding-left: 6px; }
.g-shapes { width: 246px; padding-left: 5px; }
.g-size { width: 53px; padding-left: 4px; }
.g-colors { width: 357px; padding-left: 4px; }
.g-3d { width: 62px; }
.big { display: flex; flex-direction: column; align-items: center; width: 42px; height: 66px; padding-top: 2px; border: 1px solid transparent; flex: none; white-space: nowrap; }
.big svg { width: 32px; height: 32px; }
.big span { margin: 4px 0 3px; text-align: center; }
.big.active { background: #c9e0f7; border-color: #62a2e4; }
.split svg { border-bottom: 1px solid #62a2e4; width: 40px; height: 36px; padding-bottom: 3px; }
.split span { margin-top: 1px; }
.g-3d .big { width: 60px; }
.dim { color: #999; }
.rows { display: flex; flex-direction: column; padding-left: 2px; }
.g-img .rows { padding-left: 5px; }
.row { display: flex; align-items: center; gap: 4px; height: 22px; }
.row:disabled { color: #999; }
.g-img .rows .row { gap: 3px; }
.tools { display: grid; grid-template: 28px 28px / repeat(3, 24px); justify-content: center; align-content: center; justify-items: center; align-items: center; }
.text-tool { font: 700 19px/20px "Liberation Serif", serif; color: #1f3d63; }
.shape-box { display: flex; width: 157px; height: 60px; margin-top: 3px; border: 1px solid #d0d3d6; background: #fafcff; }
.shape-grid { display: grid; grid-template: repeat(3, 20px) / repeat(7, 20px); flex: 1; align-content: center; }
.shape-grid svg { width: 16px; height: 16px; margin: auto; }
.shape-art { fill: #f3f8fd; stroke: #2267a3; stroke-width: 1; }
.shape-scroll { width: 15px; border-left: 1px solid #d0d3d6; display: grid; }
.shape-scroll button { display: flex; flex-direction: column; align-items: center; justify-content: center; background: #f5f6f7; }
.g-shapes .rows { padding-left: 6px; }
.g-shapes .row { gap: 3px; }
.well { display: block; width: 32px; height: 32px; border: 1px solid #7f7f7f; box-shadow: inset 0 0 0 1px #dcebfa; }
.well.black { background: #000; }
.well.white { width: 24px; height: 24px; margin: 4px; background: #fff; }
.palette { display: grid; grid-template: repeat(3, 20px) / repeat(10, 20px); gap: 2px; margin: 1px 0 0 1px; }
.palette button { border: 1px solid #a0a0a0; box-shadow: inset 0 0 0 1px #fff; }
.palette .empty { box-shadow: none; }
.c-black { background: #000; } .c-gray { background: #7f7f7f; } .c-dred { background: #880015; } .c-red { background: #ed1c24; } .c-orange { background: #ff7f27; }
.c-yellow { background: #fff200; } .c-green { background: #22b14c; } .c-turq { background: #00a2e8; } .c-indigo { background: #3f48cc; } .c-purple { background: #a349a4; }
.c-white { background: #fff; } .c-lgray { background: #c3c3c3; } .c-brown { background: #b97a57; } .c-rose { background: #ffaec9; } .c-gold { background: #ffc90e; }
.c-cream { background: #efe4b0; } .c-lime { background: #b5e61d; } .c-sky { background: #99d9ea; } .c-steel { background: #7092be; } .c-lav { background: #c8bfe7; }
.workspace { flex: 1; padding: 5px; background: linear-gradient(#c6cfdf, #dce6f1); overflow: hidden; }
.drawing { width: 1827px; height: 716px; background: #fff; box-shadow: 7px 7px 4px -1px #b2bfd2; }

/* Pasted pictures: 3 units are one screen pixel */
.snip { font: 12px Roboto, sans-serif; fill: #4a4a4a; }
.snip-h { font-size: 22px; fill: #222; }
.snip .b { font-weight: 700; }
.snip .it { font-style: italic; }
.snip .lk { fill: #3d97ee; }
.snip .opt { fill: #e5e5e5; stroke: #ececec; }
.snip .on { fill: #484848; }
.snip .ans { font-size: 11px; }
.snip .w { fill: #fff; font-weight: 500; }
.snip .box { fill: #fff; stroke: #ddd; stroke-width: 3; }
.snip .bad { fill: #a30d15; font-size: 15px; font-weight: 700; }
.snip .good { fill: #108010; font-size: 15px; font-weight: 700; }
.shot { font: 11px "Noto Sans", sans-serif; }
.shot .url { font: 13px "Open Sans", sans-serif; fill: #999; }
.shot .ecc { font-size: 17px; font-weight: 600; fill: #2e69ff; }
.shot .res { font: 14px "Open Sans", sans-serif; }
.shot .u { text-decoration: underline; }
.shot .b { font-weight: 700; }
.shot .fa { font: 700 19px "Liberation Serif", serif; fill: #1f3d63; }
.shot .logo-t { font: 700 25px Inter, sans-serif; fill: #0033a0; }
.shot .crumb-t { font: 17px Roboto, sans-serif; fill: #666; }
.shot .btn-t { font: 700 16px Roboto, sans-serif; fill: #fff; }

.status { display: flex; height: 26px; background: #f0f0f0; border-top: 1px solid #d7d7d7; color: #222; padding: 1px 4px 1px 0; }
.cell { display: flex; align-items: center; gap: 6px; width: 156px; padding-left: 4px; border-right: 1px solid #d9d9d9; }
.cell svg { width: 14px; height: 14px; fill: none; stroke: #1e3a5c; }
.zoom { display: flex; align-items: center; gap: 10px; margin-left: auto; width: 194px; padding-left: 26px; border-left: 1px solid #d9d9d9; }
.zoom button { width: 16px; height: 16px; line-height: 12px; border: 1px solid #777; border-radius: 8px; flex: none; font-size: 14px; }
.zoom label { width: 24px; }
.zoom input { appearance: none; width: 84px; height: 17px; margin: 0; background: linear-gradient(#d6d6d6, #d6d6d6) center / 100% 3px no-repeat; }
.zoom input::-webkit-slider-thumb { appearance: none; width: 10px; height: 17px; background: #0078d7; clip-path: polygon(0 0, 100% 0, 100% 75%, 50% 100%, 0 75%); }

.taskbar { display: flex; height: 40px; background: #231f1f; color: #fff; }
.tb { width: 48px; display: flex; align-items: center; justify-content: center; flex: none; }
.tb-search { display: flex; align-items: center; gap: 12px; width: 343px; padding: 0 12px; background: #333; border: 1px solid #5a5a5a; }
.tb-search input { flex: 1; min-width: 0; border: 0; padding: 0; background: none; font: 14px "Open Sans", sans-serif; color: #fff; }
.tb-search input::placeholder { color: #bdbdbd; opacity: 1; }
.app { width: 49px; display: flex; flex-direction: column; align-items: center; padding-top: 8px; flex: none; }
.app svg { width: 24px; height: 24px; }
.app.open::after { content: ""; width: 40px; height: 2px; margin-top: 6px; background: #76dff7; }
.app.current { background: #524e4d; margin-left: 3px; }
.app.current::after { width: 49px; }
.tray { display: flex; align-items: center; gap: 8px; margin-left: auto; padding-right: 11px; }
.weather { width: 22px; height: 22px; }
.forecast { font-size: 13px; margin-right: 8px; }
.clock { font-size: 11px; line-height: 18px; text-align: center; margin: 0 0 0 12px; }
.note { margin: 0 16px 0 6px; }

/* Browser behind the course window */
.edge-area { position: relative; flex: 1; display: flex; flex-direction: column; overflow: hidden; }
.edge-head { height: 103px; background: #4a4a4a; color: #fff; border-bottom: 1px solid #222; }
.edge-ctl { height: 28px; justify-content: flex-end; color: #999; }
.edge-tools { display: flex; align-items: center; height: 46px; padding: 0 10px 0 18px; gap: 13px; }
.back { width: 18px; height: 18px; margin-right: auto; }
.ext { display: flex; align-items: center; gap: 24px; }
.ext svg { width: 20px; height: 20px; }
.ext .avatar { width: 24px; height: 24px; }
.edge-tools .vr, .edge-marks .vr { background: #777; }
.edge-marks { display: flex; align-items: center; gap: 11px; height: 20px; padding: 0 13px; }
.mark { display: flex; align-items: center; gap: 8px; }
.messages { margin-left: auto; margin-right: 168px; }
.chev { width: 10px; height: 12px; }
.edge-body { flex: 1; display: flex; }
.vtabs { width: 48px; background: #170729; display: flex; flex-direction: column; align-items: center; gap: 19px; padding-top: 16px; }
.vtabs svg { width: 16px; height: 16px; }
.vtab-on { width: 31px; height: 32px; margin: -8px 0; border-radius: 3px; background: #4a4a4a; }
.vtab-on span { display: block; width: 16px; margin: 0 auto; background: #0033a0; color: #fff; font: 700 13px/16px "Open Sans", sans-serif; }
.vtabs hr { width: 30px; margin: -7px 0 -6px; border: 0; border-top: 1px solid #aaa; }
.page { flex: 1; display: flex; flex-direction: column; background: #fff; }
.page-head { position: relative; display: flex; align-items: center; justify-content: space-between; height: 72px; padding: 0 21px 4px 23px; box-shadow: 0 2px 6px #0005; font: 600 17px/20px "Noto Sans", sans-serif; color: #2e69ff; }
.page-head svg { width: 60px; height: 60px; }
.page-cols { flex: 1; display: flex; }
.page-nav { width: 297px; background: #0033a0; color: #fff; font-size: 14px; }
.nav-top { height: 484px; padding: 24px 0 0 15px; display: flex; flex-direction: column; gap: 34px; }
.nav-top em { padding-left: 4px; line-height: 18px; }
.nav-top svg { width: 20px; height: 20px; fill: #fff; }
.nav-mid { height: 298px; padding: 26px 0 0 19px; background: #2e69ff; display: flex; flex-direction: column; line-height: 18px; }
.nav-mid b { margin-bottom: 9px; }
.nav-mid input { width: 200px; height: 19px; margin: 7px 0 16px; background: #0033a0; border: 1px solid #ddd; }
.nav-mid a { margin-bottom: 16px; }
.page-main { flex: 1; padding: 56px 37px 0 0; }
.page-main hr { margin: 0 0 20px; border: 0; border-top: 2px solid #ddd; }
.frame { height: 311px; border: 1px solid #e2e2e2; border-bottom: 0; }
.quote { height: 104px; padding: 14px 53px; background: #d9e0e8; color: #000; font-size: 13px; line-height: 20px; text-align: right; }
.resources { width: 260px; padding: 30px 21px; background: #e1e1e1; color: #102a4c; font: 14px/19px "Open Sans", sans-serif; }
.resources h2 { font-size: 15px; line-height: 20px; font-weight: 600; margin-bottom: 10px; }
.resources p { margin-bottom: 10px; white-space: nowrap; }
.resources a { color: #36f; }
.resources .dark { color: #102a4c; text-decoration: underline; }
.scrollbar { width: 17px; background: #f1f1f1; display: flex; flex-direction: column; align-items: center; padding: 7px 0 6px; color: #555; }
.scrollbar span { width: 13px; height: 799px; margin: 6px 0 auto; background: #c1c1c1; }

/* Course window */
.popup { position: absolute; left: 75px; right: 388px; top: 9px; bottom: 36px; display: flex; flex-direction: column; background: #fff; box-shadow: 0 0 0 1px #555, 0 8px 26px #0008; font-family: Roboto, sans-serif; }
.pop-title { display: flex; align-items: center; gap: 5px; height: 30px; padding-left: 4px; background: linear-gradient(90deg, #07042b, #0a0430 60%, #23083a); color: #fff; font: 11px/16px "Noto Sans", sans-serif; }
.lrn { width: 16px; height: 16px; background: #fff; color: #234f9a; font-size: 7px; text-align: center; }
.pop-title .win-ctl { margin-left: auto; height: 28px; }
.pop-url { display: flex; align-items: center; gap: 15px; height: 30px; padding-left: 15px; background: #111; border-top: 1px solid #333; color: #8f8f8f; font: 13px/16px "Open Sans", sans-serif; white-space: nowrap; }
.pop-url svg { width: 14px; height: 16px; }
.pop-url b { font-weight: 400; color: #fff; }
.pop-head { display: flex; align-items: center; justify-content: space-between; height: 78px; padding: 4px 14px 0 19px; background: linear-gradient(90deg, #fff 14%, #fafafa 17%); border-bottom: 1px solid #e2e2e2; box-shadow: 0 1px 4px #0002; }
.logo { font: 700 25px/30px Inter, sans-serif; color: #0a33a0; }
.crumbs { display: flex; align-items: center; gap: 9px; font-size: 17px; line-height: 24px; color: #222; }
.crumbs a { color: #666; }
.crumbs svg { width: 8px; height: 14px; fill: none; stroke: #0033a0; stroke-width: 2; }
.crumbs button { margin-left: 14px; }
.crumbs button svg { width: 19px; height: 18px; }
.pop-body { flex: 1; display: flex; align-items: flex-start; justify-content: space-between; padding: 15px 21px 0 30px; font-size: 16px; line-height: 24px; color: #333; }
.question { width: 671px; display: flex; flex-direction: column; }
.question h1 { font-size: 30px; line-height: 36px; margin: 17px 0 11px; }
.question p { margin-bottom: 10px; }
.options { display: flex; flex-direction: column; gap: 10px; width: 664px; margin-top: 10px; }
.options button { height: 51px; padding: 0 15px; background: #e5e5e5; text-align: left; }
.options .picked { background: #4a4a4a; color: #fff; font-weight: 500; box-shadow: 2px 3px 3px #0003; }
.return { align-self: flex-end; width: 160px; height: 37px; margin-top: 25px; background: linear-gradient(#4b4b4b, #333); color: #fff; font-weight: 700; }
.feedback { width: 685px; height: 109px; padding: 26px 20px; border: 1px solid #aaa; color: #111; }
.feedback h2 { font-size: 20px; line-height: 24px; font-weight: 700; color: #088008; margin-bottom: 13px; }
.feedback a { color: #3391f0; }
.pop-foot { display: grid; grid-template-columns: 1fr auto 1fr; height: 55px; padding: 8px 9px 0 7px; background: #0033a0; color: #fff; font-size: 12px; line-height: 14px; font-weight: 500; }
.pop-foot button { display: flex; flex-direction: column; align-items: center; gap: 5px; justify-self: start; }
.pop-foot button svg { width: 24px; height: 24px; fill: none; stroke: #fff; stroke-width: 2; }
.pop-foot .menu svg { width: 26px; fill: #fff; stroke: none; }
.progress { display: flex; flex-direction: column; gap: 1px; padding-top: 12px; align-items: center; }
.progress div { display: flex; gap: 7px; }
.progress progress { appearance: none; width: 192px; height: 8px; margin-top: 2px; border: 0; }
progress::-webkit-progress-bar { background: #2e69ff; border-radius: 4px; }
progress::-webkit-progress-value { background: #fff; border-radius: 4px 0 0 4px; }
.progress small { font-size: 12px; font-weight: 400; color: #9db0de; }
.foot-nav { justify-self: end; display: flex; gap: 22px; padding-right: 3px; }
```
